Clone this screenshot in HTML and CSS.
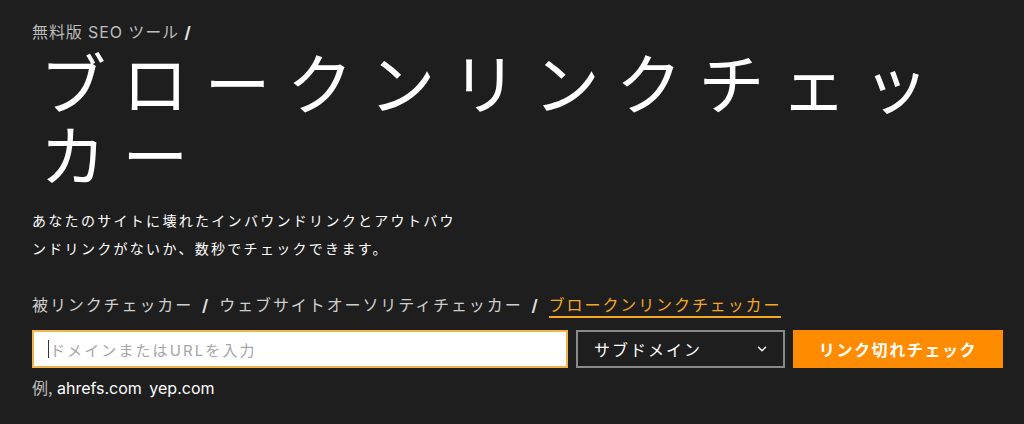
FILE: index.html
```html
<!DOCTYPE html>
<html lang="ja">
<head>
<meta charset="utf-8">
<link rel="stylesheet" href="styles.css">
</head>
<body>
<main class="page">
  <nav class="crumbs">無料版 SEO ツール <b class="sep">/</b></nav>
  <h1 class="title">ブロークンリンクチェッカー</h1>
  <p class="desc">あなたのサイトに壊れたインバウンドリンクとアウトバウ<br>ンドリンクがないか、数秒でチェックできます。</p>
  <div class="tabs">
    <a class="tab">被リンクチェッカー</a>
    <span class="slash">/</span>
    <a class="tab">ウェブサイトオーソリティチェッカー</a>
    <span class="slash">/</span>
    <a class="tab active">ブロークンリンクチェッカー</a>
  </div>
  <form class="search">
    <div class="field"><span class="caret"></span><span class="placeholder">ドメインまたはURLを入力</span></div>
    <div class="select"><span>サブドメイン</span>
      <svg class="chev" width="10" height="6" viewBox="0 0 10 6"><path d="M1.5 1.2l3.5 3.5 3.5-3.5" fill="none" stroke="#fff" stroke-width="1.5" stroke-linecap="round" stroke-linejoin="round"/></svg>
    </div>
    <button class="btn" type="button">リンク切れチェック</button>
  </form>
  <p class="examples"><span class="ex-label">例,</span> <a>ahrefs.com</a> <a>yep.com</a></p>
</main>
</body>
</html>
```
FILE: styles.css
```css
html, body { margin: 0; padding: 0; }
body {
  background: #1e1e1e;
  color: #fff;
  font-family: Inter, "Noto Sans CJK JP", sans-serif;
  width: 1024px;
  height: 424px;
  overflow: hidden;
}
.page { padding: 20px 21px 0 32px; }
.crumbs {
  font-size: 16px;
  letter-spacing: 0.9px;
  color: #bdbdbd;
  line-height: 24px;
}
.crumbs .sep { color: #e6e6e6; font-weight: 700; }
.title {
  margin: 0;
  font-family: "Noto Sans CJK JP", sans-serif;
  font-weight: 400;
  font-size: 66px;
  line-height: 72px;
  letter-spacing: 16.3px;
  margin-left: 8px;
}
.desc {
  margin: 18px 0 0 0;
  max-width: 460px;
  font-family: "Noto Sans CJK JP", sans-serif;
  font-size: 14px;
  line-height: 28px;
  letter-spacing: 2.3px;
}
.tabs {
  margin-top: 30px;
  display: flex;
  gap: 9px;
  align-items: baseline;
  font-family: "Noto Sans CJK JP", sans-serif;
  font-size: 16px;
  letter-spacing: 1.9px;
  color: #cfcfcf;
  line-height: 24px;
}
.tab { color: #cfcfcf; }
.tab.active { color: #f5a623; border-bottom: 2px solid #f5a623; }
.slash { color: #ddd; font-family: Inter, sans-serif; font-weight: 700; }
.search {
  margin-top: 12px;
  display: flex;
  gap: 8px;
  height: 38px;
}
.field {
  width: 536px;
  background: #fff;
  border: 2px solid #f0b44a;
  display: flex;
  align-items: center;
  padding-left: 14px;
  box-sizing: border-box;
}
.caret { width: 1px; height: 18px; background: #333; margin-right: 1px; }
.placeholder {
  color: #a6a6a6;
  font-family: Inter, "Noto Sans CJK JP", sans-serif;
  font-size: 15px;
  letter-spacing: 2.1px;
}
.select {
  width: 209px;
  box-sizing: border-box;
  border: 2px solid #8a8a8a;
  display: flex;
  align-items: center;
  justify-content: space-between;
  padding: 0 16px 0 16px;
  font-family: "Noto Sans CJK JP", sans-serif;
  font-size: 16px;
  letter-spacing: 2px;
}
.btn {
  width: 210px;
  border: 0;
  background: #ff8c00;
  color: #fff;
  font-family: "Noto Sans CJK JP", sans-serif;
  font-weight: 700;
  font-size: 16px;
  letter-spacing: 1.6px;
}
.examples {
  margin: 7px 0 0 0;
  font-size: 16px;
  line-height: 24px;
}
.ex-label { color: #bdbdbd; font-family: "Noto Sans CJK JP", sans-serif; }
.examples a { color: #fff; margin-right: 3px; }
```
